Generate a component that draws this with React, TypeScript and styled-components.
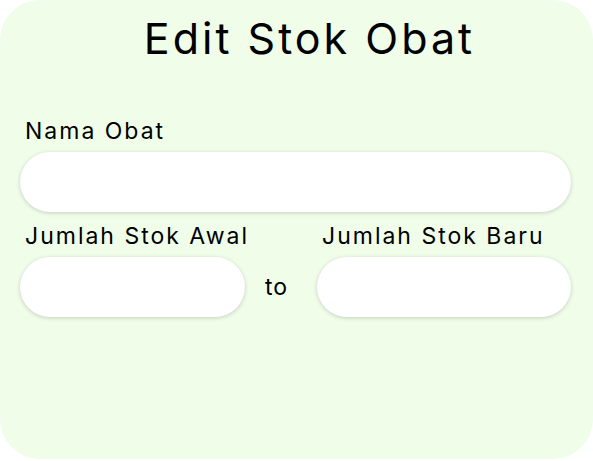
import React from 'react';
import styled, { createGlobalStyle } from 'styled-components';

const GlobalStyle = createGlobalStyle`
  html, body {
    margin: 0;
    padding: 0;
    background: #ffffff;
  }
  body {
    font-family: Inter, "Open Sans", sans-serif;
    color: #000;
  }
`;

const Card = styled.div`
  box-sizing: border-box;
  width: 593px;
  height: 459px;
  background-color: #effde9;
  border-radius: 40px;
  padding: 0 22px 0 20px;
`;

const Title = styled.h1`
  margin: 0;
  padding: 12px 0 0 28px;
  font-size: 43px;
  font-weight: 400;
  letter-spacing: 3px;
  line-height: 52px;
  text-align: center;
`;

const Form = styled.div`
  display: grid;
  grid-template-columns: 225px 1fr 254px;
  margin-top: 52px;
`;

const Field = styled.div<{ $span?: boolean }>`
  display: flex;
  flex-direction: column;
  grid-column: ${({ $span }) => ($span ? '1 / -1' : 'auto')};
`;

const Label = styled.label`
  padding-left: 5px;
  font-size: 23px;
  letter-spacing: 2px;
  line-height: 30px;
  margin-bottom: 6px;
  white-space: nowrap;
`;

const Input = styled.input`
  box-sizing: border-box;
  width: 100%;
  height: 60px;
  border: none;
  border-radius: 30px;
  background: #ffffff;
  box-shadow: 0 1px 4px rgba(0, 0, 0, 0.18);
  padding: 0 22px;
  font: inherit;
  font-size: 20px;
  outline: none;
`;

const Separator = styled.div`
  align-self: end;
  height: 60px;
  display: flex;
  align-items: center;
  justify-content: center;
  font-size: 23px;
  letter-spacing: 1px;
  padding-right: 9px;
`;

const Gap = styled.div`
  grid-column: 1 / -1;
  height: 9px;
`;

const App: React.FC = () => {
  return (
    <>
      <GlobalStyle />
      <Card>
        <Title>Edit Stok Obat</Title>
        <Form>
          <Field $span>
            <Label>Nama Obat</Label>
            <Input type="text" />
          </Field>
          <Gap />
          <Field>
            <Label>Jumlah Stok Awal</Label>
            <Input type="text" />
          </Field>
          <Separator>to</Separator>
          <Field>
            <Label>Jumlah Stok Baru</Label>
            <Input type="text" />
          </Field>
        </Form>
      </Card>
    </>
  );
};

export default App;
